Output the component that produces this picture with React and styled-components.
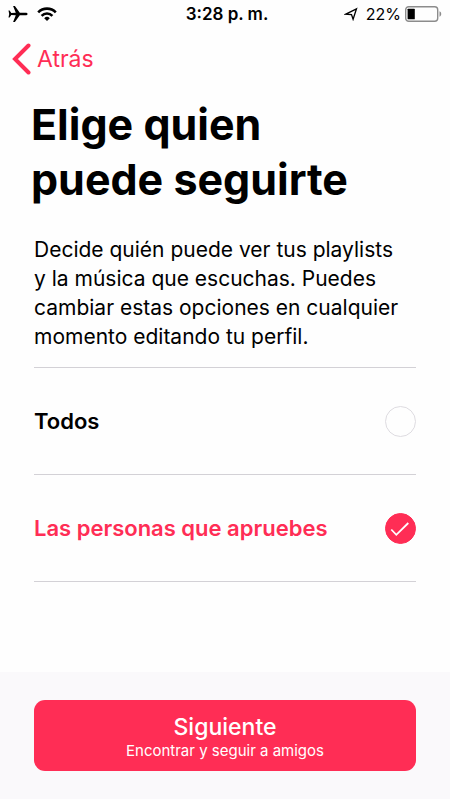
import { useState } from "react";
import styled, { createGlobalStyle } from "styled-components";

const GlobalStyle = createGlobalStyle`
    body {
        margin: 0;
        background: #FEFEFE;
        color: #000000;
        font-family: 'Inter', 'Liberation Sans', sans-serif;
    }

    * {
        box-sizing: border-box;
    }
`;

const Screen = styled.div`
    display: flex;
    flex-direction: column;
    min-height: 100vh;
`;

const StatusBar = styled.header`
    display: grid;
    grid-template-columns: 1fr auto 1fr;
    align-items: center;
    height: 28px;
    padding: 0 8px;
    font-size: 17px;
    line-height: 28px;
`;

const StatusGroup = styled.div`
    display: flex;
    align-items: center;
    justify-content: ${({ $end }) => ($end ? "flex-end" : "flex-start")};
    gap: ${({ $end }) => ($end ? "4px" : "9px")};
`;

const LocationIcon = styled.svg`
    margin-right: 4px;
`;

const Battery = styled.span`
    font-size: 16px;
`;

const Clock = styled.time`
    padding-left: 4px;
    font-weight: 600;
`;

const BackLink = styled.a`
    display: flex;
    align-items: center;
    align-self: flex-start;
    gap: 6px;
    height: 62px;
    padding: 0 12px;
    color: #FF2D55;
    font-size: 23px;
    text-decoration: none;
`;

const Content = styled.main`
    display: flex;
    flex-direction: column;
    flex: 1;
    padding: 7px 34px 0;
`;

const Title = styled.h1`
    margin: 0 0 0 -3px;
    font-size: 43px;
    font-weight: 700;
    line-height: 55px;
`;

const Description = styled.p`
    margin: 28px 0 16px;
    font-size: 21px;
    line-height: 29px;
`;

const Options = styled.div`
    border-top: 1px solid #D3D1D6;
`;

const Option = styled.label`
    display: flex;
    align-items: center;
    justify-content: space-between;
    height: 107px;
    border-bottom: 1px solid #D3D1D6;
    color: ${({ $checked }) => ($checked ? "#FF2D55" : "#000000")};
    font-size: 22px;
    font-weight: 600;
    cursor: pointer;
`;

const RadioMark = styled.span`
    display: grid;
    place-items: center;

    > * {
        grid-area: 1 / 1;
    }

    svg {
        pointer-events: none;
    }
`;

const Radio = styled.input`
    appearance: none;
    width: 31px;
    height: 31px;
    margin: 0;
    border: 1px solid #DEDCE1;
    border-radius: 50%;
    cursor: pointer;

    &:checked {
        border-color: #FF2D55;
        background: #FF2D55;
    }
`;

const Footer = styled.footer`
    padding: 28px 34px;
    background: #FAF9FB;
`;

const NextButton = styled.button`
    display: flex;
    flex-direction: column;
    align-items: center;
    justify-content: center;
    width: 100%;
    height: 71px;
    padding: 2px 0 0;
    border: none;
    border-radius: 11px;
    background: #FF2D55;
    color: #FFFFFF;
    font-family: inherit;
    cursor: pointer;

    span {
        font-size: 23px;
        font-weight: 500;
        line-height: 28px;
    }

    small {
        font-size: 15px;
        line-height: 20px;
    }
`;

const options = [
    { id: "all", label: "Todos" },
    { id: "approved", label: "Las personas que apruebes" },
];

export default function App() {
    const [selected, setSelected] = useState("approved");

    return (
        <>
            <GlobalStyle />
            <Screen>
                <StatusBar>
                    <StatusGroup>
                        <svg width="20" height="18" viewBox="0 0 20 18" aria-hidden="true">
                            <path d="M19.600 9c0-.8-.9-1.300-2.200-1.300h-5.600L6.900.900H5.100L7.800 7.700l-4.500.200-1.700-2.400H.500L1.200 9 .500 12.500h1.100l1.700-2.400 4.500.200-2.700 6.800h1.800l4.900-6.800h5.600c1.300 0 2.200-.5 2.200-1.300z" />
                        </svg>
                        <svg width="20" height="16" viewBox="0 0 20 16" aria-hidden="true">
                            <g fill="none" stroke="#000000" strokeWidth="2.600">
                                <path d="M1.200 6.300a12.400 12.400 0 0 1 17.600 0" />
                                <path d="M4.600 9.800a7.600 7.600 0 0 1 10.800 0" />
                            </g>
                            <path d="M7.200 12.200a4 4 0 0 1 5.600 0L10 15z" />
                        </svg>
                    </StatusGroup>
                    <Clock>3:28 p. m.</Clock>
                    <StatusGroup $end>
                        <LocationIcon width="14" height="14" viewBox="0 0 14 14" aria-hidden="true">
                            <path d="M12.500 1.800L1.800 7.100l5.700.400 1.600 4.800z" fill="none" stroke="#000000" strokeWidth="1.300" strokeLinejoin="miter" />
                        </LocationIcon>
                        <Battery>22%</Battery>
                        <svg width="37" height="16" viewBox="0 0 37 16" aria-hidden="true">
                            <rect x=".7" y=".7" width="32" height="14.600" rx="3" fill="none" stroke="#8C8C8C" strokeWidth="1.400" />
                            <rect x="2.600" y="2.700" width="7.200" height="10.600" rx=".6" />
                            <path d="M34.500 5.300c2.300.9 2.300 4.500 0 5.400z" fill="#8C8C8C" />
                        </svg>
                    </StatusGroup>
                </StatusBar>
                <BackLink href="#">
                    <svg width="19" height="32" viewBox="0 0 19 32" aria-hidden="true">
                        <path d="M16.500 2.500L3 16l13.500 13.500" fill="none" stroke="#FF2D55" strokeWidth="4" strokeLinecap="round" strokeLinejoin="miter" />
                    </svg>
                    Atrás
                </BackLink>
                <Content>
                    <Title>
                        Elige quien
                        <br />
                        puede seguirte
                    </Title>
                    <Description>
                        Decide quién puede ver tus playlists
                        <br />
                        y la música que escuchas. Puedes
                        <br />
                        cambiar estas opciones en cualquier
                        <br />
                        momento editando tu perfil.
                    </Description>
                    <Options role="radiogroup" aria-label="Elige quien puede seguirte">
                        {options.map(({ id, label }) => (
                            <Option key={id} htmlFor={id} $checked={selected === id}>
                                {label}
                                <RadioMark>
                                    <Radio
                                        type="radio"
                                        id={id}
                                        name="followers"
                                        checked={selected === id}
                                        onChange={() => setSelected(id)}
                                    />
                                    {selected === id && (
                                        <svg width="31" height="31" viewBox="0 0 31 31" aria-hidden="true">
                                            <path d="M6.300 16.500l5 5.300L23.300 10" fill="none" stroke="#FFFFFF" strokeWidth="1.800" />
                                        </svg>
                                    )}
                                </RadioMark>
                            </Option>
                        ))}
                    </Options>
                </Content>
                <Footer>
                    <NextButton type="button">
                        <span>Siguiente</span>
                        <small>Encontrar y seguir a amigos</small>
                    </NextButton>
                </Footer>
            </Screen>
        </>
    );
}
